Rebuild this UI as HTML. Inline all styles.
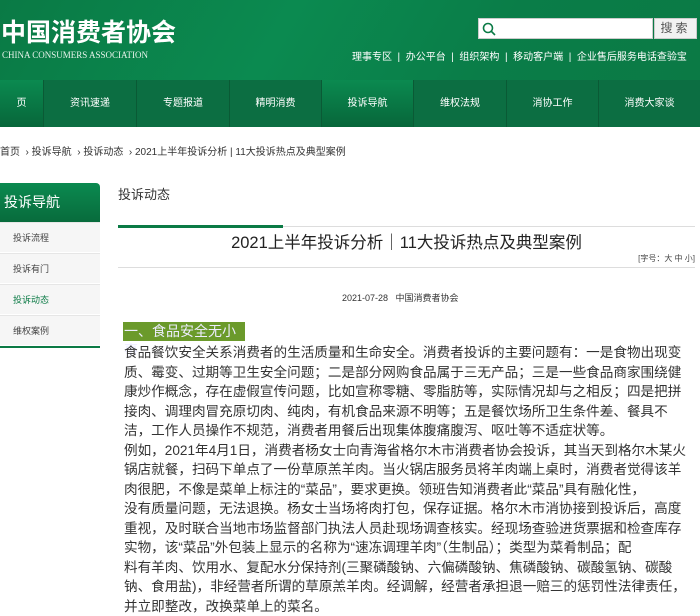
<!DOCTYPE html>
<html><head><meta charset="utf-8"><style>
*{margin:0;padding:0;box-sizing:border-box}
body{width:700px;height:613px;overflow:hidden;background:#fff;font-family:"Liberation Sans","Noto Sans CJK SC",sans-serif;position:relative;color:#333}
.hdr{position:absolute;left:0;top:0;width:700px;height:80px;background:linear-gradient(120deg,#0a7a45 0%,#0b8a50 40%,#0a7d48 70%,#0b7a45 100%)}
.logo{position:absolute;left:1px;top:18px;color:#fff;font-size:25px;font-weight:bold;line-height:30px}
.en{position:absolute;left:2px;top:50px;color:#e8f4ec;font-family:"Liberation Serif",serif;font-size:9px;line-height:10px}
.search{position:absolute;left:478px;top:18px;width:175px;height:21px;background:#fff;border:1px solid #ccc}
.btn{position:absolute;left:654px;top:18px;width:43px;height:21px;background:#f2f2f2;border:1px solid #ccc;font-size:12px;color:#555;text-align:center;line-height:19px;letter-spacing:3px}
.links{position:absolute;left:352px;top:48px;color:#fff;font-size:10px;white-space:nowrap}
.nav{position:absolute;left:0;top:80px;width:700px;height:47px;background:#0c6e42}
.nav div{position:absolute;top:0;height:47px;line-height:47px;color:#fff;font-size:10px;text-align:center;border-left:1px solid #0a5a35}
.nav .act{background:linear-gradient(#0b8a50,#07663a)}
.crumb{position:absolute;left:0;top:143px;font-size:10px;color:#333;white-space:nowrap}
.side{position:absolute;left:0;top:183px;width:100px}
.sh{height:39px;background:linear-gradient(#0b8a50,#086b3c);color:#fff;font-size:14px;line-height:39px;padding-left:4px;border-radius:0 4px 0 0}
.si{height:31px;line-height:31px;font-size:9px;color:#444;padding-left:13px;background:#f6f6f6;border-bottom:1px solid #fff;border-top:1px solid #e6e6e6}
.sb{height:2px;background:#0b7a45}
.t1{position:absolute;left:118px;top:184px;font-size:13px;color:#333}
.ln{position:absolute;left:118px;top:226px;width:577px;height:1px;background:#ddd}
.ln2{position:absolute;left:118px;top:225px;width:165px;height:3px;background:#0b7a45}
.tt{position:absolute;left:118px;width:577px;top:229px;text-align:center;font-size:16.5px;color:#222}
.fs{position:absolute;right:5px;top:253px;font-size:8px;color:#444}
.ln3{position:absolute;left:118px;top:267px;width:577px;height:1px;background:#ddd}
.meta{position:absolute;left:342px;top:291px;font-size:9px;color:#333}
.h1{position:absolute;left:123px;top:322px;width:122px;height:19px;background:#6b9a2b;color:#eef;font-size:14px;line-height:19px;padding-left:1px}
.body{position:absolute;left:124px;top:343px;font-size:13.6px;line-height:19.5px;color:#333;white-space:nowrap}
</style></head><body>
<div class="hdr">
<div class="logo">中国消费者协会</div>
<div class="en">CHINA CONSUMERS ASSOCIATION</div>
<div class="search"><svg width="14" height="14" style="position:absolute;left:3px;top:3px"><circle cx="6" cy="6" r="4.5" stroke="#0a7a45" stroke-width="1.6" fill="none"/><line x1="9" y1="9" x2="13" y2="13" stroke="#0a7a45" stroke-width="1.6"/></svg></div>
<div class="btn">搜索</div>
<div class="links">理事专区 &nbsp;|&nbsp; 办公平台 &nbsp;|&nbsp; 组织架构 &nbsp;|&nbsp; 移动客户端 &nbsp;|&nbsp; 企业售后服务电话查验宝</div>
</div>
<div class="nav">
<div class="act" style="left:0;width:43px;border:none">页</div>
<div style="left:43px;width:93px">资讯速递</div>
<div style="left:136px;width:93px">专题报道</div>
<div style="left:229px;width:92px">精明消费</div>
<div class="act" style="left:321px;width:92px">投诉导航</div>
<div style="left:413px;width:93px">维权法规</div>
<div style="left:506px;width:92px">消协工作</div>
<div style="left:598px;width:102px">消费大家谈</div>
</div>
<div class="crumb">首页 &nbsp;› 投诉导航 &nbsp;› 投诉动态 &nbsp;› 2021上半年投诉分析 | 11大投诉热点及典型案例</div>
<div class="side">
<div class="sh">投诉导航</div>
<div class="si">投诉流程</div>
<div class="si">投诉有门</div>
<div class="si" style="color:#0b7a45">投诉动态</div>
<div class="si">维权案例</div>
<div class="sb"></div>
</div>
<div class="t1">投诉动态</div>
<div class="ln"></div><div class="ln2"></div>
<div class="tt">2021上半年投诉分析｜11大投诉热点及典型案例</div>
<div class="fs">[字号：大 中 小]</div>
<div class="ln3"></div>
<div class="meta">2021-07-28 &nbsp; 中国消费者协会</div>
<div class="h1">一、食品安全无小事</div>
<div class="body">
食品餐饮安全关系消费者的生活质量和生命安全。消费者投诉的主要问题有：一是食物出现变<br>
质、霉变、过期等卫生安全问题；二是部分网购食品属于三无产品；三是一些食品商家围绕健<br>
康炒作概念，存在虚假宣传问题，比如宣称零糖、零脂肪等，实际情况却与之相反；四是把拼<br>
接肉、调理肉冒充原切肉、纯肉，有机食品来源不明等；五是餐饮场所卫生条件差、餐具不<br>
洁，工作人员操作不规范，消费者用餐后出现集体腹痛腹泻、呕吐等不适症状等。<br>
例如，2021年4月1日，消费者杨女士向青海省格尔木市消费者协会投诉，其当天到格尔木某火<br>
锅店就餐，扫码下单点了一份草原羔羊肉。当火锅店服务员将羊肉端上桌时，消费者觉得该羊<br>
肉很肥，不像是菜单上标注的“菜品”，要求更换。领班告知消费者此“菜品”具有融化性，<br>
没有质量问题，无法退换。杨女士当场将肉打包，保存证据。格尔木市消协接到投诉后，高度<br>
重视，及时联合当地市场监督部门执法人员赴现场调查核实。经现场查验进货票据和检查库存<br>
实物，该“菜品”外包装上显示的名称为“速冻调理羊肉”（生制品）；类型为菜肴制品；配<br>
料有羊肉、饮用水、复配水分保持剂(三聚磷酸钠、六偏磷酸钠、焦磷酸钠、碳酸氢钠、碳酸<br>
钠、食用盐)，非经营者所谓的草原羔羊肉。经调解，经营者承担退一赔三的惩罚性法律责任，<br>
并立即整改，改换菜单上的菜名。
</div>
</body></html>
